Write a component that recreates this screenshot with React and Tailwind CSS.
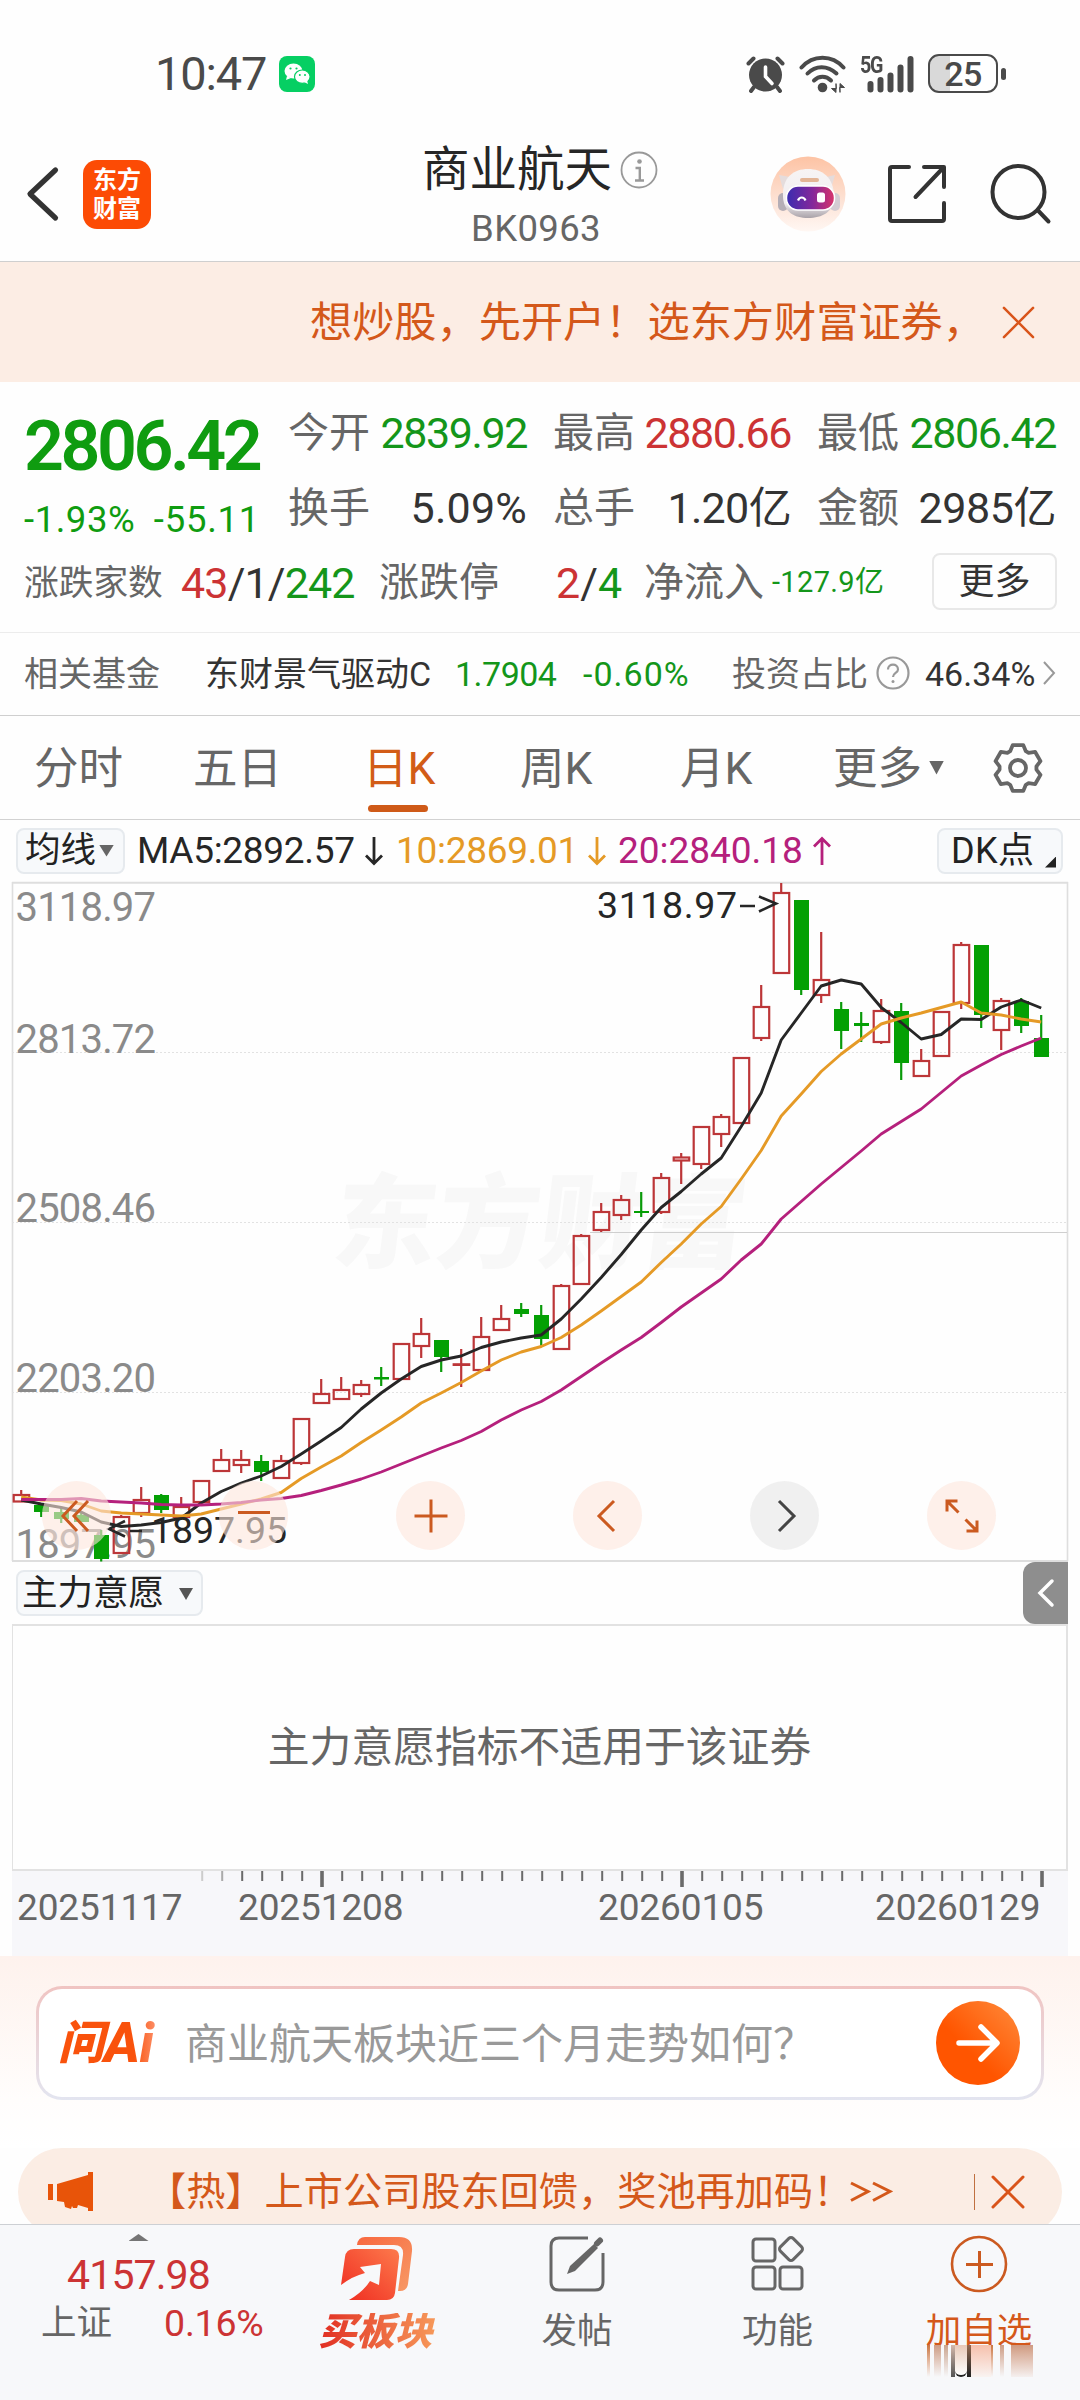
import React from "react";

/* [high, bodyTop, bodyBottom, low, up] in chart y units, one per trading day */
const CANDLES = [
  [1490, 1495, 1501.5, 1501.5, 1], [1503, 1505, 1512, 1517, 0], [1507, 1512, 1519, 1523, 0], [1513, 1515, 1522, 1522, 0],
  [1530, 1535, 1559, 1561.5, 0], [1515, 1517, 1553, 1553, 1], [1487, 1500, 1513, 1517, 1], [1494, 1495, 1510, 1513, 0],
  [1497, 1507, 1517, 1517, 1], [1481, 1481, 1502, 1502, 1], [1449, 1460, 1471, 1471, 1], [1450, 1460, 1465, 1473, 1],
  [1455, 1461, 1472, 1481, 0], [1455, 1461, 1478, 1478, 1], [1419, 1419, 1463, 1465, 1], [1379, 1394, 1403, 1403, 1],
  [1377, 1390, 1399, 1399, 1], [1380, 1385, 1394, 1397, 1], [1367, 1377, 1379.5, 1386, 0], [1343, 1344, 1379, 1379, 1],
  [1318, 1334, 1346, 1358, 1], [1340, 1340, 1357, 1372, 0], [1349, 1364.3, 1364.9, 1387, 1], [1317, 1337, 1370, 1370, 1],
  [1305, 1319, 1330, 1330, 1], [1303, 1309, 1314, 1317, 0], [1305, 1315, 1339, 1346, 0], [1284, 1286, 1349, 1349, 1],
  [1234, 1236, 1284, 1284, 1], [1203, 1212, 1230, 1232, 1], [1195, 1200, 1215, 1220, 1], [1192, 1211, 1213, 1217, 0],
  [1173, 1178, 1212, 1214, 1], [1153, 1157.5, 1160.5, 1184, 1], [1127, 1127, 1164, 1169, 1], [1114, 1117, 1134, 1147, 1],
  [1058, 1058, 1123, 1123, 1], [985, 1007, 1038, 1041, 1], [883, 893, 973, 973, 1], [900, 900, 990, 995, 0],
  [932, 980, 995, 1003, 1], [1002, 1009, 1031, 1049, 0], [1012, 1023, 1026, 1042, 0], [999, 1011, 1042, 1044, 1],
  [1003, 1011, 1063, 1080, 0], [1049, 1061, 1076, 1076, 1], [1012, 1012, 1056, 1056, 1], [942, 945, 1003, 1009, 1],
  [945, 945, 1015, 1028, 0], [998, 1001, 1030, 1050, 1], [998, 1001, 1026, 1033, 0], [1015, 1038, 1057, 1057, 0],
];

const MA5 = [1500, 1504, 1507.5, 1512, 1522, 1526.5, 1525, 1522.5, 1518, 1503, 1491.5, 1483, 1476, 1466.5, 1454, 1441, 1427.5, 1409, 1393, 1379, 1366.5, 1360, 1356, 1347.5, 1342, 1338, 1335, 1319, 1299, 1277.5, 1254.5, 1230, 1207.5, 1191.5, 1174, 1158, 1126.5, 1093, 1040, 1013, 986, 980, 984, 1007.5, 1022.5, 1039, 1034.5, 1019, 1019.5, 1007, 1000, 1008];
const MA10 = [1497, 1500, 1500.5, 1504, 1511, 1513, 1514, 1515, 1516, 1514, 1509, 1504, 1499, 1492.5, 1478.5, 1467, 1456, 1442.5, 1430, 1417, 1403, 1393, 1382.5, 1371, 1360, 1352, 1346.5, 1337.5, 1325, 1311, 1296.5, 1282, 1262.5, 1244, 1224, 1206.5, 1179, 1150.5, 1116, 1094, 1071.5, 1054, 1039, 1024, 1018, 1013, 1007.5, 1002, 1013, 1015, 1019, 1022];
const MA20 = [1499.5, 1499.5, 1499.5, 1498.5, 1501, 1502, 1503, 1504.5, 1505, 1505, 1504, 1502.5, 1500, 1498.5, 1495.5, 1490.5, 1485, 1479, 1472, 1464, 1456, 1448, 1440.5, 1431.5, 1420, 1410, 1401.5, 1390, 1376.5, 1363, 1350, 1337.5, 1322.5, 1307, 1293, 1279, 1260, 1244, 1219, 1201.5, 1184, 1167.5, 1151, 1134, 1121.5, 1109, 1092.5, 1076, 1065, 1054.5, 1046, 1038];

const cx = (i) => 21.2 + i * 20;
const line = (ys) => ys.map((y, i) => `${cx(i)},${y}`).join(" ");

const PRICE_LABELS = [
  ["3118.97", 921],
  ["2813.72", 1053],
  ["2508.46", 1222],
  ["2203.20", 1391.5],
  ["1897.95", 1557.5],
];

function StatusBar() {
  return (
    <div className="flex h-[127px] items-center pt-[20px] text-[#4a4a4a]">
      <span className="ml-[155px] w-[124px] text-[47px] font-[450] leading-none tracking-[-0.025em]">10:47</span>
      <svg className="shrink-0" width="36" height="36" viewBox="0 0 36 36">
        <rect width="36" height="36" rx="8" fill="#06cf63" />
        <ellipse cx="14.5" cy="15" rx="9" ry="7.5" fill="#fff" />
        <path d="M8 20l-1 4 5-2z" fill="#fff" />
        <ellipse cx="23.3" cy="20.7" rx="7.8" ry="6.7" fill="#fff" stroke="#06cf63" strokeWidth="1.2" />
        <path d="M25 26l4 2-1-4z" fill="#fff" />
        <g fill="#06cf63">
          <circle cx="11.5" cy="12.5" r="1.1" /><circle cx="17.5" cy="12.5" r="1.1" />
          <circle cx="20.8" cy="19" r="1" /><circle cx="26" cy="19" r="1" />
        </g>
      </svg>
      <svg className="ml-[431px] shrink-0" width="39" height="38" viewBox="0 0 39 38">
        <circle cx="19.5" cy="20" r="16.5" fill="#4a4a4a" />
        <path d="M2.5 8.5l5-5M36.500 8.500l-5-5M8 32l-3 4M31 32l3 4" stroke="#4a4a4a" strokeWidth="4" strokeLinecap="round" />
        <path d="M19.500 12v9.500l6.500 7" stroke="#fff" strokeWidth="3.600" fill="none" strokeLinecap="round" />
      </svg>
      <svg className="ml-[14px] shrink-0" width="47" height="38" viewBox="0 0 47 38" fill="none" stroke="#4a4a4a" strokeWidth="4" strokeLinecap="round">
        <path d="M2.500 12.500C14-.5 33-.5 44.500 12.500" />
        <path d="M8.500 18.500c8-8.500 20-8.500 29 0" />
        <path d="M15 25.500c5-5 12-5 17 0" />
        <circle cx="23.500" cy="32.500" r="4.800" fill="#4a4a4a" stroke="none" />
        <path d="M37 29v8.500l-4.500-4H37zM41 37V28.500l4.500 4H41z" strokeWidth="1" fill="#4a4a4a" />
      </svg>
      <div className="relative ml-[14px] h-[38px] w-[54px] shrink-0">
        <span className="absolute -top-[2px] left-0 origin-left scale-x-[0.82] text-[24px] font-bold leading-none tracking-[-0.06em]">5G</span>
        <svg width="54" height="38" viewBox="0 0 54 38" fill="#4a4a4a">
          <rect x="7.500" y="26" width="6" height="11.500" rx="3" />
          <rect x="17.500" y="22" width="6" height="15.500" rx="3" />
          <rect x="27.500" y="17.500" width="6" height="20" rx="3" />
          <rect x="37.500" y="9.500" width="6" height="28" rx="3" />
          <rect x="47.500" y="1" width="6" height="36.500" rx="3" />
        </svg>
      </div>
      <div className="ml-[14px] flex h-[39px] w-[70px] shrink-0 items-center justify-center rounded-[11px] border-[2.5px] border-[#4a4a4a] bg-[linear-gradient(90deg,#d9d9d9_31%,#fff_31%)]">
        <span className="text-[34px] font-medium leading-none tracking-[-0.02em]">25</span>
      </div>
      <div className="ml-[3px] h-[12px] w-[4.500px] rounded-sm bg-[#4a4a4a]" />
    </div>
  );
}

function RobotAvatar() {
  return (
    <svg width="76" height="78" viewBox="0 0 76 78">
      <defs>
        <linearGradient id="halo" x1="0" y1="0" x2="0" y2="1">
          <stop offset="0" stopColor="#fdc3a4" /><stop offset="0.6" stopColor="#fde3d6" /><stop offset="1" stopColor="#fff7f3" />
        </linearGradient>
        <linearGradient id="visor" x1="0" y1="0" x2="1" y2="0">
          <stop offset="0" stopColor="#3a2cb0" /><stop offset="0.55" stopColor="#85279a" /><stop offset="1" stopColor="#d8356a" />
        </linearGradient>
        <linearGradient id="shell" x1="0" y1="0" x2="0" y2="1">
          <stop offset="0" stopColor="#f7f4f4" /><stop offset="0.7" stopColor="#f1edf0" /><stop offset="1" stopColor="#a9a2a8" />
        </linearGradient>
      </defs>
      <circle cx="38" cy="39" r="37.500" fill="url(#halo)" />
      <path d="M9 20l11 2-7 12zM65 20l-9 2 5 12z" fill="#e5dcdc" />
      <rect x="8" y="38" width="10" height="18" rx="5" fill="#b5aeb6" />
      <rect x="60" y="38" width="10" height="18" rx="5" fill="#d3ccd2" />
      <path d="M13 42C12 22 24 14 38 14s26 8 26 28c0 15-12 21-26 21S14 57 13 42z" fill="url(#shell)" />
      <rect x="30" y="23" width="19" height="4" rx="2" fill="#e3b596" />
      <rect x="16.500" y="31" width="48" height="24" rx="11.500" fill="url(#visor)" stroke="#fff" strokeWidth="1.500" />
      <path d="M28 45.500c1.500-4 6-4 7.500 0" stroke="#fff" strokeWidth="2.200" fill="none" />
      <rect x="47" y="37.500" width="8" height="10" rx="2.500" fill="#fff" />
    </svg>
  );
}

function Header() {
  return (
    <header className="flex h-[135px] items-center border-b border-[#cfcfcf]">
      <svg className="ml-[26px] shrink-0" width="34" height="56" viewBox="0 0 34 56" fill="none" stroke="#333" strokeWidth="5.200" strokeLinecap="round" strokeLinejoin="round">
        <path d="M29.500 4L4 28l25.500 24" />
      </svg>
      <div className="ml-[23px] flex h-[69px] w-[68px] shrink-0 flex-col items-center justify-center gap-[5px] rounded-[14px] bg-[#fc4b05] text-[24px] font-bold leading-none text-white">
        <span>东方</span>
        <span>财富</span>
      </div>
      <div className="ml-[271px] flex w-[237px] shrink-0 flex-col pt-[6px]">
        <div className="flex items-center">
          <span className="text-[47.500px] leading-none text-[#262626]">商业航天</span>
          <svg className="ml-[8px]" width="38" height="38" viewBox="0 0 38 38" fill="none" stroke="#999" strokeWidth="1.800">
            <circle cx="19" cy="19" r="17.500" />
            <circle cx="19.500" cy="10.500" r="2.300" fill="#999" stroke="none" />
            <path d="M15.500 17h4.300v12.500M15 29.500h9" strokeWidth="2.400" />
          </svg>
        </div>
        <span className="mt-[17px] w-[228px] text-center text-[36.500px] leading-none tracking-[0.010em] text-[#666]">BK0963</span>
      </div>
      <div className="ml-[111px] shrink-0"><RobotAvatar /></div>
      <svg className="ml-[41px] shrink-0" width="60" height="60" viewBox="0 0 60 60" fill="none" stroke="#333" strokeWidth="4" strokeLinecap="round" strokeLinejoin="round">
        <path d="M22 3H5q-2 0-2 2v50q0 2 2 2h50q2 0 2-2V39M37 3h20v20M56.500 3.500L28.500 33" />
      </svg>
      <svg className="ml-[41px] shrink-0" width="64" height="64" viewBox="0 0 64 64" fill="none" stroke="#333" strokeWidth="4" strokeLinecap="round">
        <circle cx="30.500" cy="30" r="26" />
        <path d="M50 48.500L60.500 59.500" />
      </svg>
    </header>
  );
}

function CloseIcon({ size, width }) {
  return (
    <svg className="shrink-0" width={size} height={size} viewBox="0 0 34 34" fill="none" stroke="#d9541a" strokeWidth={width} strokeLinecap="round">
      <path d="M2 2l30 30M32 2L2 32" />
    </svg>
  );
}

function Stat({ label, value, tone }) {
  return (
    <div className="flex h-[75px] items-center justify-between pt-[4px]">
      <span className="text-[41px] leading-none text-[#666]">{label}</span>
      <span className={"text-[43px] leading-none " + tone}>{value}</span>
    </div>
  );
}

const GREEN = "text-[#14961a] tracking-[-0.033em]";
const RED = "text-[#cc3334] tracking-[-0.033em]";

function Quote() {
  return (
    <section className="h-[251px] border-b border-[#ececec]">
      <div className="flex h-[162px]">
        <div className="w-[288px] shrink-0 pl-[24px] pt-[25px] text-[#0f9c10]">
          <div className="flex h-[75px] items-center pt-[3px] text-[70px] font-semibold leading-none tracking-[-0.050em]">2806.42</div>
          <div className="flex h-[62px] w-[236px] items-center justify-between pt-[15px] text-[36.500px] leading-none">
            <span className="tracking-[0.015em]">-1.93%</span>
            <span className="tracking-[0.020em]">-55.11</span>
          </div>
        </div>
        <div className="grid w-[768px] grid-cols-[239px_238px_239px] content-start gap-x-[26px] pt-[12px]">
          <Stat label="今开" value="2839.92" tone={GREEN} />
          <Stat label="最高" value="2880.66" tone={RED} />
          <Stat label="最低" value="2806.42" tone={GREEN} />
          <Stat label="换手" value="5.09%" tone="text-[#333] tracking-[0.005em]" />
          <Stat label="总手" value="1.20亿" tone="text-[#333] tracking-[-0.015em]" />
          <Stat label="金额" value="2985亿" tone="text-[#333] tracking-[-0.010em]" />
        </div>
      </div>
      <div className="flex h-[75px] items-center whitespace-nowrap leading-none text-[#666]">
        <span className="ml-[24px] w-[157px] pt-[3px] text-[34.700px]">涨跌家数</span>
        <span className="w-[198px] pt-[3px] text-[43px] tracking-[-0.020em]">
          <span className="text-[#cc3334]">43</span><span className="text-[#333]">/1/</span><span className="text-[#14961a]">242</span>
        </span>
        <span className="w-[177px] pt-[3px] text-[40px]">涨跌停</span>
        <span className="w-[88px] pt-[3px] text-[43px]">
          <span className="text-[#cc3334]">2</span><span className="text-[#333]">/</span><span className="text-[#14961a]">4</span>
        </span>
        <span className="w-[128px] pt-[3px] text-[40px]">净流入</span>
        <span className="w-[160px] pt-[2px] text-[29px] tracking-[0.012em] text-[#14961a]">-127.9亿</span>
        <button className="h-[57px] w-[125px] rounded-lg border-2 border-[#e8e8e8] text-[36px] leading-none text-[#333]">更多</button>
      </div>
    </section>
  );
}

function FundRow() {
  return (
    <div className="flex h-[83px] items-center whitespace-nowrap border-b border-[#cfcfcf] text-[34px] leading-none text-[#666]">
      <span className="ml-[24px] w-[181px]">相关基金</span>
      <span className="w-[250px] text-[#333]">东财景气驱动C</span>
      <span className="w-[128px] tracking-[-0.015em] text-[#14961a]">1.7904</span>
      <span className="w-[149px] tracking-[0.030em] text-[#14961a]">-0.60%</span>
      <span className="w-[144px]">投资占比</span>
      <svg className="mb-[2px] shrink-0" width="34" height="34" viewBox="0 0 34 34" fill="none" stroke="#999">
        <circle cx="17" cy="17" r="15.500" strokeWidth="2.200" />
        <path d="M12 13.500c0-6.500 10-6.500 10 0 0 3.500-5 3.500-5 7.500" strokeWidth="2.200" />
        <circle cx="17" cy="25.500" r="1.500" fill="#999" stroke="none" />
      </svg>
      <span className="ml-[15px] w-[117px] tracking-[0] text-[#333]">46.34%</span>
      <svg className="mb-[2px] shrink-0" width="14" height="26" viewBox="0 0 14 26" fill="none" stroke="#999" strokeWidth="2"><path d="M2 2l10 11L2 24" /></svg>
    </div>
  );
}

const gearPath = () => {
  const pts = [];
  for (let k = 0; k < 6; k++) {
    [[-25, 18.500], [-13, 23.500], [13, 23.500], [25, 18.500]].forEach(([d, r]) => {
      const a = ((k * 60 + d - 90) * Math.PI) / 180;
      pts.push(`${(27 + r * Math.cos(a)).toFixed(2)} ${(27 + r * Math.sin(a)).toFixed(2)}`);
    });
  }
  return "M" + pts.join("L") + "Z";
};

function Tabs() {
  return (
    <nav className="flex h-[104px] items-center whitespace-nowrap border-b border-[#d2d2d2] text-[44.500px] leading-none text-[#666]">
      <span className="ml-[34px] w-[159px] pt-[4px]">分时</span>
      <span className="w-[170px] pt-[4px]">五日</span>
      <div className="relative w-[157px] pt-[4px] text-[#d25c17]">
        日K
        <span className="absolute left-[5px] top-[62px] h-[6.500px] w-[60px] rounded-full bg-[#cf5a18]" />
      </div>
      <span className="w-[160px] pt-[4px]">周K</span>
      <span className="w-[153px] pt-[4px]">月K</span>
      <span className="w-[96px] pt-[4px]">更多</span>
      <span className="h-[14px] w-[15px] bg-[#666] [clip-path:polygon(0_0,100%_0,50%_100%)]" />
      <svg className="ml-[47px] shrink-0" width="54" height="54" viewBox="0 0 54 54" fill="none" stroke="#666" strokeWidth="3.800" strokeLinejoin="round">
        <path d={gearPath()} />
        <circle cx="27" cy="27" r="8" />
      </svg>
    </nav>
  );
}

function Arrow({ color, up }) {
  return (
    <svg className={up ? "shrink-0 rotate-180" : "shrink-0"} width="20" height="30" viewBox="0 0 20 30" fill="none" stroke={color} strokeWidth="2.800">
      <path d="M10 1v26M2 19.500l8 8 8-8" />
    </svg>
  );
}

function MaRow() {
  return (
    <div className="flex h-[62px] items-center whitespace-nowrap pb-[1px] text-[37px] leading-none">
      <button className="ml-[16px] flex h-[46px] w-[109px] shrink-0 items-center rounded-lg border-2 border-[#e6eaee] bg-[#f7f9fb] pl-[7px] text-[35.500px] leading-none text-[#222]">
        均线
        <span className="ml-[3px] h-[12px] w-[15px] bg-[#666] [clip-path:polygon(0_0,100%_0,50%_100%)]" />
      </button>
      <span className="ml-[12px] w-[227px] tracking-[-0.008em] text-[#262626]">MA5:2892.57</span>
      <Arrow color="#262626" />
      <span className="ml-[12px] w-[191px] tracking-[-0.008em] text-[#e59a26]">10:2869.01</span>
      <Arrow color="#e59a26" />
      <span className="ml-[11px] w-[194px] tracking-[-0.001em] text-[#b5207c]">20:2840.18</span>
      <Arrow color="#b5207c" up />
      <button className="relative ml-[105px] h-[46px] w-[126px] shrink-0 rounded-lg border-2 border-[#e6eaee] bg-[#f7f9fb] pl-[12px] text-left text-[36px] leading-none tracking-[0.010em] text-[#222]">
        DK点
        <span className="absolute bottom-[4px] right-[5px] size-[11px] bg-[#222] [clip-path:polygon(100%_0,100%_100%,0_100%)]" />
      </button>
    </div>
  );
}

function RoundButton({ gray, children }) {
  return (
    <button className={"flex size-[69px] items-center justify-center rounded-full " + (gray ? "bg-[#ececec]/80" : "bg-[#fde6dc]/60")}>
      <svg width="40" height="40" viewBox="0 0 40 40" fill="none" stroke={gray ? "#444" : "#cb5a20"} strokeWidth="3">
        {children}
      </svg>
    </button>
  );
}

function KChart() {
  return (
    <div className="relative h-[680px]">
      <svg className="block overflow-visible" width="1080" height="680" viewBox="0 882 1080 680" fill="none">
        <g transform="translate(330 1260) skewX(-7)">
          <text fontSize="103" fontWeight="800" fill="#f8f8f8" fontFamily="Noto Sans CJK SC, sans-serif">东方财富</text>
        </g>
        <path d="M12.500 882V1561M1067.500 882V1561" stroke="#dedede" strokeWidth="1.600" />
        <path d="M12 882.800H1068M12 1561H1068" stroke="#dedede" strokeWidth="2" />
        <path d="M12 1052.500H1068M12 1222.500H1068M12 1392.500H1068" stroke="#e2e2e2" strokeDasharray="2 2" />
        <path d="M590 1232.500H1067" stroke="#cfcfcf" />
        <g fontSize="40" fill="#8a8a8a">
          {PRICE_LABELS.map(([t, y]) => (
            <text key={t} x="15.500" y={y} textLength="140.500">{t}</text>
          ))}
        </g>
        {CANDLES.map(([h, t, b, l, up], i) => {
          const x = cx(i);
          return up ? (
            <g key={i} stroke="#bc3638" strokeWidth="2.200">
              <path d={`M${x} ${h}V${t}M${x} ${b}V${l}`} />
              <rect x={x - 7.500} y={t} width="15.500" height={b - t} />
            </g>
          ) : (
            <g key={i}>
              <path d={`M${x} ${h}V${l}`} stroke="#0a9a0a" strokeWidth="2.200" />
              <rect x={x - 7.200} y={t} width="15" height={b - t} fill="#04a004" />
            </g>
          );
        })}
        <g strokeWidth="2.900" strokeLinejoin="round">
          <polyline points={line(MA5)} stroke="#262626" />
          <polyline points={line(MA10)} stroke="#e59a26" />
          <polyline points={line(MA20)} stroke="#b5207c" />
        </g>
        <g fontSize="37.500" fill="#262626">
          <text x="597" y="917.500" textLength="140">3118.97</text>
          <text x="151" y="1542.500" textLength="136">1897.95</text>
        </g>
        <path d="M740 906H755M759 896.500L776 903.500L759 911.500M125 1521L109 1529L125 1536.500M130 1531H142" stroke="#262626" strokeWidth="2.600" />
      </svg>
      <div className="absolute left-[42px] top-[599px] flex gap-[108px]">
        <RoundButton><path d="M20 5L6 20l14 15M31 5L17 20l14 15" /></RoundButton>
        <RoundButton><path d="M4 16.500h32" /></RoundButton>
        <RoundButton><path d="M3.500 20h33M20 3.500v33" /></RoundButton>
        <RoundButton><path d="M26 5L11 20l15 15" /></RoundButton>
        <RoundButton gray><path d="M14 5l15 15-15 15" /></RoundButton>
        <RoundButton><path d="M5 15.500V5H15.500M5.500 5.500l11 11M35 24.500V35H24.500M34.500 34.500l-11-11" /></RoundButton>
      </div>
    </div>
  );
}

const DATES = ["20251117", "20251208", "20260105", "20260129"];

function SubChart() {
  return (
    <>
      <div className="flex h-[62px] items-center justify-between">
        <button className="ml-[16px] flex h-[46px] w-[187px] items-center rounded-lg border-2 border-[#e6eaee] bg-[#f7f9fb] pl-[4px] pt-[2px] text-[35.500px] leading-none text-[#222]">
          主力意愿
          <span className="ml-[15px] h-[12px] w-[14px] bg-[#555] [clip-path:polygon(0_0,100%_0,50%_100%)]" />
        </button>
        <div className="mr-[12px] flex h-[62px] w-[45px] items-center justify-center rounded-l-[12px] bg-[#8e8e8e]">
          <svg width="20" height="30" viewBox="0 0 20 30" fill="none" stroke="#fff" strokeWidth="3.500" strokeLinecap="round"><path d="M16 3L4 15l12 12" /></svg>
        </div>
      </div>
      <div className="mx-[12px] flex h-[247px] items-center justify-center border-2 border-l border-[#e2e2e2] text-[41.800px] leading-none text-[#666]">主力意愿指标不适用于该证券</div>
      <div className="mx-[12px] h-[85px] bg-[#f7f7fa]">
        <svg className="block" width="1056" height="18" viewBox="12 0 1056 18">
          {CANDLES.map((_, i) => {
            if (i < 9) return null;
            const major = i === 15 || i === 33 || i === 51;
            return <rect key={i} x={cx(i) - (major ? 1 : 0)} y="0" width={major ? 3.600 : 2} height={major ? 16 : 10} fill={i === 9 ? "#ccc" : i === 10 ? "#aaa" : "#6a6a6a"} />;
          })}
        </svg>
        <div className="flex text-[37px] leading-none tracking-[-0.003em] text-[#666]">
          <span className="ml-[5px] w-[221px]">{DATES[0]}</span>
          <span className="w-[360px]">{DATES[1]}</span>
          <span className="w-[277px]">{DATES[2]}</span>
          <span>{DATES[3]}</span>
        </div>
      </div>
    </>
  );
}

function AskAi() {
  return (
    <section className="h-[192px] bg-[linear-gradient(180deg,#fef2ed,#fffdfc_75%,#fff)] pt-[30px]">
      <div className="mx-[36px] h-[114px] rounded-[26px] bg-[linear-gradient(180deg,#f0c4c2,#e3e5f0)] p-[3px]">
        <div className="flex h-full items-center rounded-[23px] bg-white">
          <div className="ml-[19px] flex w-[127px] items-center bg-[linear-gradient(90deg,#f9520c_60%,#fd9a78_80%)] bg-clip-text font-extrabold italic leading-[54px] text-transparent">
            <span className="text-[46px]">问</span>
            <span className="text-[55px] tracking-[-0.010em]">Ai</span>
          </div>
          <span className="w-[711px] whitespace-nowrap pt-[3px] text-[42px] leading-none text-[#999]">商业航天板块近三个月走势如何？</span>
          <button className="ml-[40px] flex size-[84px] shrink-0 items-center justify-center rounded-full bg-[linear-gradient(45deg,#ff5500_40%,#ff8c3c)]">
            <svg width="46" height="40" viewBox="0 0 46 40" fill="none" stroke="#fff" strokeWidth="5.500" strokeLinecap="round" strokeLinejoin="round">
              <path d="M4 20h37M26 4l16 16-16 16" />
            </svg>
          </button>
        </div>
      </div>
    </section>
  );
}

function HotBar() {
  return (
    <div className="h-[76px] overflow-hidden px-[18px]">
      <div className="flex h-[88px] items-center whitespace-nowrap rounded-full bg-[#fbede4] text-[39.200px] leading-none text-[#d4581a]">
        <svg className="ml-[29px] shrink-0" width="47" height="42" viewBox="0 0 47 42" fill="#e85409">
          <path d="M1 13h5v16H1zM10 13l31-9V1h5v39h-5v-3l-10-3-1 3h-4l-1-2-1 3-6-2-1-5-7-1z" />
        </svg>
        <span className="ml-[53px] w-[702px] pt-[2px]">【热】上市公司股东回馈，奖池再加码！</span>
        <svg className="shrink-0" width="44" height="22" viewBox="0 0 44 22" fill="none" stroke="#d4581a" strokeWidth="3"><path d="M2 2l17 8.500L2 19.500M24 2l17 8.500L24 19.500" /></svg>
        <span className="ml-[81px] mr-[16px] h-[36px] w-px bg-[#c07040]" />
        <CloseIcon size={34} width={3} />
      </div>
    </div>
  );
}

function NavItem({ label, className, children }) {
  return (
    <div className={"flex shrink-0 flex-col items-center pt-[10px] " + className}>
      <div className="flex h-[58px] items-center">{children}</div>
      <span className="mt-[21px] text-[35.500px] leading-none">{label}</span>
    </div>
  );
}

function BottomNav() {
  return (
    <nav className="flex h-[176px] whitespace-nowrap border-t border-[#cdd0d4] bg-[#f7f8fa] text-[#666]">
      <div className="flex w-[277px] shrink-0 flex-col items-center pt-[9px] leading-none">
        <span className="h-[7px] w-[20px] bg-[#757575] [clip-path:polygon(50%_0,100%_100%,0_100%)]" />
        <span className="mt-[14px] text-[41px] tracking-[-0.022em] text-[#cc3334]">4157.98</span>
        <div className="mt-[9px] flex w-[277px] items-center">
          <span className="ml-[41px] w-[123px] text-[35.500px]">上证</span>
          <span className="text-[37.500px] tracking-[-0.005em] text-[#cc3334]">0.16%</span>
        </div>
      </div>
      <div className="flex w-[200px] shrink-0 flex-col items-center pt-[11px]">
        <svg width="72" height="68" viewBox="0 0 72 68">
          <defs>
            <linearGradient id="buyFront" x1="0" y1="1" x2="1" y2="0"><stop offset="0" stopColor="#ef2b20" /><stop offset="1" stopColor="#fd7a4c" /></linearGradient>
            <linearGradient id="buyBack" x1="0" y1="0" x2="1" y2="1"><stop offset="0" stopColor="#f8683f" /><stop offset="1" stopColor="#f79a66" /></linearGradient>
          </defs>
          <path d="M16 9q1-8 8-8h34q14 0 13 14l-4 33q-1 7-8 7h-2l5-36q1-10-9-10z" fill="url(#buyBack)" />
          <path d="M13 13h37q9 0 8 9l-4 35q-1 7-8 7H8Q22 56 29 45l9 4 2-21-21 3 5 6Q12 40 0 49l4-28q1-8 9-8z" fill="url(#buyFront)" />
        </svg>
        <span className="mt-[9px] mr-[3px] bg-[linear-gradient(90deg,#e02a20,#f79a5a)] bg-clip-text px-1 text-[38px] font-black italic leading-none text-transparent">买板块</span>
      </div>
      <NavItem label="发帖" className="w-[200px]">
        <svg width="56" height="56" viewBox="0 0 56 56" fill="none" stroke="#666" strokeWidth="3">
          <path d="M39 2H10Q2 2 2 10v36q0 8 8 8h36q8 0 8-8V17" />
          <path d="M18 38l3-8L45 8l4 4-23 23z" fill="#666" stroke="none" />
          <path d="M48 7.500l3-3" strokeWidth="6" strokeLinecap="round" />
        </svg>
      </NavItem>
      <NavItem label="功能" className="w-[201px]">
        <svg width="54" height="56" viewBox="0 0 54 56" fill="none" stroke="#666" strokeWidth="3">
          <rect x="2" y="3" width="22" height="22" rx="3" />
          <rect x="2" y="31" width="22" height="22" rx="3" />
          <rect x="29" y="31" width="22" height="22" rx="3" />
          <rect x="31" y="4" width="18" height="18" rx="3" transform="rotate(45 40 13)" />
        </svg>
      </NavItem>
      <div className="relative">
        <NavItem label="加自选" className="w-[202px] text-[#d4581a]">
          <svg width="58" height="58" viewBox="0 0 58 58" fill="none" stroke="#cb5a20" strokeWidth="2.600">
            <circle cx="29" cy="29" r="27" /><path d="M16 29.500h27M29.500 16v27" strokeWidth="3" />
          </svg>
        </NavItem>
        <div className="absolute left-[49px] top-[120px] flex h-[32px] w-[106px] bg-[#f7f8fa]">
          <span className="w-[3px] bg-linear-to-b from-[#c9763f] to-[#f7f8fa]" />
          <span className="ml-[4px] w-[7px] bg-linear-to-b from-[#cd9d85] to-[#f7f8fa]" />
          <span className="ml-[3px] w-[4px] bg-linear-to-b from-[#c9a48f] to-[#f7f8fa]" />
          <span className="ml-[3px] w-[4px] bg-linear-to-b from-[#d5b8aa] to-[#555]" />
          <span className="w-[12px] rounded-b-lg border-b-2 border-[#222] bg-linear-to-b from-[#e8c9b8] to-white" />
          <span className="w-[4px] bg-linear-to-b from-[#956a50] to-[#222]" />
          <span className="w-[20px] bg-linear-to-b from-[#f5c0ac] to-[#f9f3f1]" />
          <span className="w-[2px] bg-linear-to-b from-[#c9763f] to-[#f7f8fa]" />
          <span className="ml-[7px] w-[4px] bg-linear-to-b from-[#cd9d85] to-[#f7f8fa]" />
          <span className="ml-[7px] w-[22px] bg-linear-to-b from-[#cf9a80] to-[#f5f0ef]" />
        </div>
      </div>
    </nav>
  );
}

export default function App() {
  return (
    <div className="h-[2400px] w-[1080px] overflow-hidden bg-[#fefefe] font-['Roboto','Noto_Sans_CJK_SC',sans-serif]">
      <StatusBar />
      <Header />
      <div className="flex h-[120px] items-center bg-[#fcede4] text-[42.200px] leading-none text-[#d4581a]">
        <span className="ml-[310px] w-[692px] whitespace-nowrap pt-[3px]">想炒股，先开户！选东方财富证券，</span>
        <CloseIcon size={33} width={2.600} />
      </div>
      <Quote />
      <FundRow />
      <Tabs />
      <MaRow />
      <KChart />
      <SubChart />
      <AskAi />
      <HotBar />
      <BottomNav />
    </div>
  );
}
